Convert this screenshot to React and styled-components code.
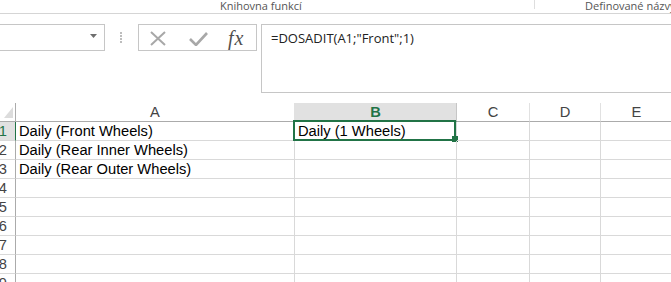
import React from 'react';
import styled, { createGlobalStyle } from 'styled-components';

const Global = createGlobalStyle`
  html, body { margin: 0; padding: 0; background: #fff; }
  body { width: 671px; height: 282px; overflow: hidden; }
`;

const GREEN = '#217346';
const GRID = '#d9d9d9';
const HEAD_LINE = '#ababab';

const Page = styled.div`
  width: 671px;
  height: 282px;
  overflow: hidden;
  background: #fff;
  display: flex;
  flex-direction: column;
  font-family: "Liberation Sans", Arial, sans-serif;
`;

const RibbonFooter = styled.div`
  height: 13px;
  flex-shrink: 0;
  display: flex;
  align-items: flex-start;
  border-bottom: 1px solid #d5d5d5;
`;

const RibbonGroup = styled.div`
  width: ${p => (p.$width ? `${p.$width}px` : 'auto')};
  flex-shrink: 0;
  box-sizing: border-box;
  padding-left: ${p => p.$pad}px;
  font-family: "Open Sans", "Noto Sans", sans-serif;
  font-size: 11px;
  line-height: 12px;
  color: #555;
  white-space: nowrap;
`;

const RibbonSeparator = styled.div`
  width: 1px;
  height: 9px;
  background: #dedede;
  flex-shrink: 0;
`;

const FormulaRow = styled.div`
  display: flex;
  align-items: flex-start;
  padding-top: 10px;
  flex-shrink: 0;
`;

const NameBox = styled.div`
  width: 105px;
  height: 27px;
  box-sizing: border-box;
  border: 1px solid #c6c6c6;
  border-left: none;
  display: flex;
  align-items: center;
  justify-content: flex-end;
  padding-right: 7px;
  padding-bottom: 3px;
  flex-shrink: 0;
`;

const Dots = styled.div`
  display: flex;
  flex-direction: column;
  gap: 1px;
  margin-left: 15px;
  margin-top: 8px;
  flex-shrink: 0;
`;

const Dot = styled.span`
  width: 2px;
  height: 2px;
  background: #bdbdbd;
`;

const FxBox = styled.div`
  width: 119px;
  height: 27px;
  box-sizing: border-box;
  border: 1px solid #c6c6c6;
  margin-left: 16px;
  display: flex;
  align-items: center;
  padding-left: 11px;
  flex-shrink: 0;
`;

const IconSlot = styled.span`
  display: flex;
  margin-left: ${p => p.$gap || 0}px;
  margin-top: ${p => p.$top || 0}px;
`;

const FxLabel = styled.span`
  margin-left: 20px;
  font-family: "Liberation Serif", "Times New Roman", serif;
  font-style: italic;
  font-size: 20px;
  line-height: 20px;
  letter-spacing: 1px;
  color: #505050;
  margin-top: 1px;
`;

const FormulaBox = styled.div`
  flex: 1;
  height: 69px;
  box-sizing: border-box;
  border: 1px solid #c6c6c6;
  border-right: none;
  margin-left: 4px;
  padding: 4px 0 0 9px;
  font-family: "Open Sans", "Noto Sans", sans-serif;
  font-size: 13px;
  line-height: 18px;
  color: #222;
  white-space: nowrap;
`;

const Sheet = styled.div`
  margin-top: 10px;
  display: grid;
  grid-template-columns: 16px 279px 162px 73px 71px 72px;
  grid-auto-rows: 19px;
  font-size: 14.7px;
  line-height: 18px;
`;

const Corner = styled.div`
  box-sizing: border-box;
  border-right: 1px solid ${HEAD_LINE};
  border-bottom: 1px solid ${HEAD_LINE};
  display: flex;
  align-items: flex-end;
  justify-content: flex-end;
  padding: 0 2px 3px 0;
`;

const ColHeader = styled.div`
  box-sizing: border-box;
  border-bottom: 1px solid ${p => (p.$active ? GREEN : HEAD_LINE)};
  border-right: 1px solid ${p => (p.$active ? '#c6c6c6' : '#e1e1e1')};
  background: ${p => (p.$active ? '#e1e1e1' : '#fff')};
  color: ${p => (p.$active ? GREEN : '#444')};
  font-weight: ${p => (p.$active ? 700 : 400)};
  text-align: center;
`;

const RowHeader = styled.div`
  box-sizing: border-box;
  border-right: 1px solid ${p => (p.$active ? GREEN : HEAD_LINE)};
  border-bottom: 1px solid ${GRID};
  background: ${p => (p.$active ? '#e1e1e1' : '#fff')};
  color: ${p => (p.$active ? GREEN : '#444')};
  display: flex;
  justify-content: flex-end;
  padding-right: 8px;
  overflow: hidden;
  white-space: nowrap;
`;

const Cell = styled.div`
  position: relative;
  box-sizing: border-box;
  border-right: 1px solid ${GRID};
  border-bottom: 1px solid ${GRID};
  padding-left: 3px;
  color: #000;
  white-space: nowrap;
`;

const Selection = styled.div`
  position: absolute;
  left: -2px;
  top: -2px;
  width: 163px;
  height: 21px;
  box-sizing: border-box;
  border: 2px solid ${GREEN};
  pointer-events: none;
`;

const FillHandle = styled.span`
  position: absolute;
  left: 157px;
  top: 14px;
  width: 6px;
  height: 6px;
  background: ${GREEN};
`;

const columns = ['A', 'B', 'C', 'D', 'E'];
const data = {
  1: ['Daily (Front Wheels)', 'Daily (1 Wheels)'],
  2: ['Daily (Rear Inner Wheels)', ''],
  3: ['Daily (Rear Outer Wheels)', ''],
};
const rows = [1, 2, 3, 4, 5, 6, 7, 8, 9];

export default function App() {
  return (
    <Page>
      <Global />
      <RibbonFooter>
        <RibbonGroup $width={534} $pad={220}>Knihovna funkcí</RibbonGroup>
        <RibbonSeparator />
        <RibbonGroup $pad={50}>Definované názvy</RibbonGroup>
      </RibbonFooter>

      <FormulaRow>
        <NameBox>
          <svg width="7" height="4" viewBox="0 0 7 4">
            <polygon points="0,0 7,0 3.5,4" fill="#6e6e6e" />
          </svg>
        </NameBox>
        <Dots>
          <Dot />
          <Dot />
          <Dot />
          <Dot />
        </Dots>
        <FxBox>
          <IconSlot $top={1}>
            <svg width="16" height="15" viewBox="0 0 16 15">
              <path d="M1 1 L15 14 M15 1 L1 14" stroke="#a8a8a8" strokeWidth="2" fill="none" />
            </svg>
          </IconSlot>
          <IconSlot $gap={23} $top={2}>
            <svg width="19" height="14" viewBox="0 0 19 14">
              <path d="M1 7 L7 13 L18 1" stroke="#a8a8a8" strokeWidth="2.6" fill="none" strokeLinejoin="miter" />
            </svg>
          </IconSlot>
          <FxLabel>fx</FxLabel>
        </FxBox>
        <FormulaBox>=DOSADIT(A1;"Front";1)</FormulaBox>
      </FormulaRow>

      <Sheet>
        <Corner>
          <svg width="9" height="11" viewBox="0 0 9 11">
            <polygon points="9,0 9,11 0,11" fill="#dcdcdc" />
          </svg>
        </Corner>
        {columns.map(c => (
          <ColHeader key={c} $active={c === 'B'}>{c}</ColHeader>
        ))}
        {rows.map(r => (
          <React.Fragment key={r}>
            <RowHeader $active={r === 1}>{r}</RowHeader>
            {columns.map((c, i) => (
              <Cell key={c}>
                {(data[r] && data[r][i]) || ''}
                {r === 1 && c === 'B' && (
                  <Selection>
                    <FillHandle />
                  </Selection>
                )}
              </Cell>
            ))}
          </React.Fragment>
        ))}
      </Sheet>
    </Page>
  );
}
